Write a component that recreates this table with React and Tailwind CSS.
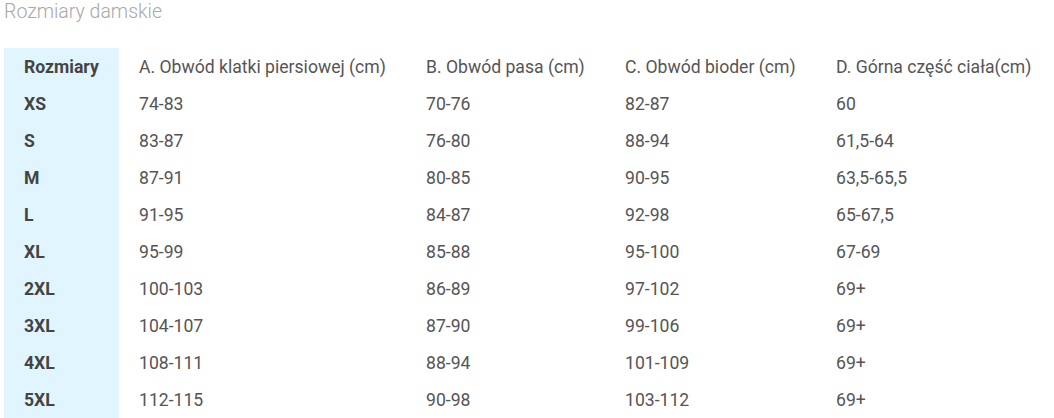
import React from "react";

const rows = [
  ["XS", "74-83", "70-76", "82-87", "60"],
  ["S", "83-87", "76-80", "88-94", "61,5-64"],
  ["M", "87-91", "80-85", "90-95", "63,5-65,5"],
  ["L", "91-95", "84-87", "92-98", "65-67,5"],
  ["XL", "95-99", "85-88", "95-100", "67-69"],
  ["2XL", "100-103", "86-89", "97-102", "69+"],
  ["3XL", "104-107", "87-90", "99-106", "69+"],
  ["4XL", "108-111", "88-94", "101-109", "69+"],
  ["5XL", "112-115", "90-98", "103-112", "69+"],
];

const headers = [
  "A. Obwód klatki piersiowej (cm)",
  "B. Obwód pasa (cm)",
  "C. Obwód bioder (cm)",
  "D. Górna część ciała(cm)",
];

export default function App() {
  return (
    <div className="bg-white w-[1054px] h-[418px] overflow-hidden pl-1 pt-0" style={{ fontFamily: "Roboto, sans-serif" }}>
      <div className="text-[19.5px] leading-[24px] font-light text-[#a8a8a8] h-[48px]">Rozmiary damskie</div>
      <table className="border-collapse text-[17.6px] text-[#555]">
        <thead>
          <tr className="h-[37px]">
            <th className="w-[115px] bg-[#e1f5fe] pl-5 pt-[2px] text-left font-bold text-[#444]">Rozmiary</th>
            <th className="w-[287px] pl-5 pt-[2px] text-left font-normal whitespace-nowrap">{headers[0]}</th>
            <th className="w-[199px] pl-5 pt-[2px] text-left font-normal whitespace-nowrap">{headers[1]}</th>
            <th className="w-[211px] pl-5 pt-[2px] text-left font-normal whitespace-nowrap">{headers[2]}</th>
            <th className="w-[220px] pl-5 pt-[2px] text-left font-normal whitespace-nowrap">{headers[3]}</th>
          </tr>
        </thead>
        <tbody>
          {rows.map((r) => (
            <tr key={r[0]} className="h-[37px]">
              <td className="bg-[#e1f5fe] pl-5 pt-[2px] font-bold text-[#444]">{r[0]}</td>
              <td className="pl-5 pt-[2px]">{r[1]}</td>
              <td className="pl-5 pt-[2px]">{r[2]}</td>
              <td className="pl-5 pt-[2px]">{r[3]}</td>
              <td className="pl-5 pt-[2px]">{r[4]}</td>
            </tr>
          ))}
        </tbody>
      </table>
    </div>
  );
}
